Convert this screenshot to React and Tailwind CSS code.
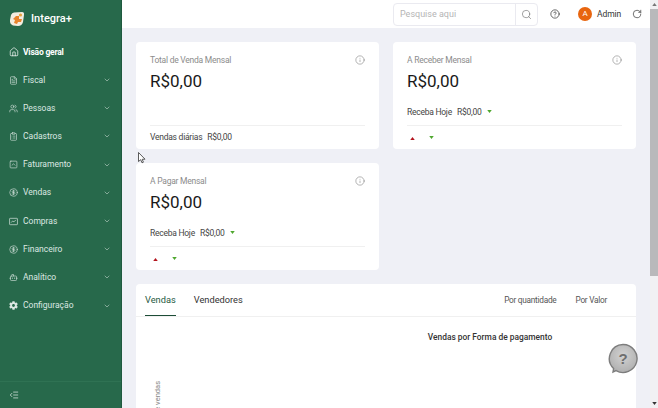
import React from 'react';
import { ChevronDown, Home, FileText, Users, ClipboardList, SquareChevronUp, CircleDollarSign, Bot, IndentDecrease, Search, CircleHelp, RotateCw, Info } from 'lucide-react';
import { FaCog } from 'react-icons/fa';

function ChartBox({ size, className }) {
  return (
    <svg width={size} height={size} viewBox="0 0 24 24" fill="none" stroke="currentColor" strokeWidth="1.8" className={className}>
      <rect x="1.5" y="3.5" width="21" height="17" rx="1.5" />
      <path d="M5.5 15 L10 10.5 L13 13 L18.5 7.5" />
    </svg>
  );
}

function Gear({ size, className }) {
  return <FaCog size={size} className={className} />;
}

const menu = [
  { label: 'Fiscal', icon: FileText },
  { label: 'Pessoas', icon: Users },
  { label: 'Cadastros', icon: ClipboardList },
  { label: 'Faturamento', icon: SquareChevronUp },
  { label: 'Vendas', icon: CircleDollarSign },
  { label: 'Compras', icon: ChartBox },
  { label: 'Financeiro', icon: CircleDollarSign },
  { label: 'Analítico', icon: Bot },
  { label: 'Configuração', icon: Gear },
];

function Logo() {
  return (
    <svg width="16" height="17" viewBox="0 0 16 17">
      <path d="M5 1.5 L13 1 Q15.5 1 15 4 L14 11 Q13 15 9 15 L4 14.5 Q0.5 13 1 9 L2 4 Q3 1.8 5 1.5 Z" fill="#f4ede0" />
      <path d="M7 5 L10 5 L10 8 L13 8 L12 11 L9 11 L8 13 L5 12 L6 9 L4 8 Z" fill="#e8842c" />
      <circle cx="11.5" cy="4" r="1.6" fill="#e8a23c" />
    </svg>
  );
}

function Caret({ up }) {
  return (
    <svg width="5" height="3" viewBox="0 0 6 4">
      <path d={up ? 'M3 0 L6 4 L0 4 Z' : 'M0 0 L6 0 L3 4 Z'} fill={up ? '#b3141d' : '#4ea72e'} />
    </svg>
  );
}

function Card({ title, sub, carets }) {
  return (
    <div className="h-[107px] bg-white rounded-sm px-[14px] flex flex-col">
      <div className="flex items-center justify-between pt-[10px] h-[26px]">
        <span className="text-[8.5px] tracking-[-0.24px] mt-[1px] text-[#8c8c8c]">{title}</span>
        <Info size={10} strokeWidth={1.2} className="text-[#6b6b6b]" />
      </div>
      <div className="text-[17px] leading-[24px] mt-[1px] text-[#1a1a1a]">R$0,00</div>
      {carets ? (
        <>
          <div className="flex items-center gap-[5px] text-[8.5px] tracking-[-0.25px] text-[#444] mt-[12px] h-[14px]">
            <span>{sub}</span>
            <span>R$0,00</span>
            <span className="ml-[1px] mb-[2px]"><Caret /></span>
          </div>
          <div className="border-t border-[#f0f0f0] mt-[6px] pt-[10px] pl-[3px] flex items-start gap-[14px]">
            <span className="mt-[1px] leading-none"><Caret up /></span>
            <span className="leading-none"><Caret /></span>
          </div>
        </>
      ) : (
        <div className="mt-auto border-t border-[#f0f0f0] h-[24px] flex items-center gap-[5px] text-[8.5px] tracking-[-0.25px] text-[#444]">
          <span>{sub}</span>
          <span>R$0,00</span>
        </div>
      )}
    </div>
  );
}

export default function App() {
  return (
    <div className="relative h-[408px] w-[658px] overflow-hidden flex bg-[#eff0f6] font-['Roboto',sans-serif]">
      {/* Sidebar */}
      <aside className="w-[122px] shrink-0 bg-[#27694b] border-r border-[#1f5a3f] flex flex-col text-[#dce8e2]">
        <div className="h-[38px] flex items-center pl-[9px] gap-[6px]">
          <Logo />
          <span className="text-[11px] font-medium text-white">Integra+</span>
        </div>
        <div className="h-[28px] flex items-center pl-[9px] gap-[4px] text-white">
          <Home size={10} strokeWidth={1.7} />
          <span className="text-[8.5px] tracking-[-0.2px] font-bold">Visão geral</span>
        </div>
        <nav className="flex-1">
          {menu.map((m) => (
            <div key={m.label} className="h-[28.2px] flex items-center pl-[9px] pr-[10px] gap-[5px]">
              <m.icon size={9} strokeWidth={1.6} className="shrink-0" />
              <span className="text-[8.5px] flex-1">{m.label}</span>
              <ChevronDown size={8} strokeWidth={1.7} className="opacity-90" />
            </div>
          ))}
        </nav>
        <div className="h-[27px] border-t border-[#2f7253] flex items-center pl-[9px] text-white">
          <IndentDecrease size={10} strokeWidth={1.5} />
        </div>
      </aside>

      {/* Main */}
      <main className="flex-1 min-w-0 flex flex-col">
        <header className="h-[28px] bg-white flex items-center shrink-0 mr-[8px]">
          <div className="ml-[271px] w-[145px] h-[23px] border border-[#eaeaf0] rounded-sm flex">
            <span className="flex-1 pl-[6px] text-[9px] leading-[21px] text-[#b5b5b5]">Pesquise aqui</span>
            <span className="w-[22px] border-l border-[#eaeaf0] flex items-center justify-center">
              <Search size={11} className="text-[#666]" strokeWidth={1.3} />
            </span>
          </div>
          <CircleHelp size={10} strokeWidth={1.6} className="ml-[12px] text-[#222]" />
          <span className="ml-[18px] w-[14px] h-[14px] rounded-full bg-[#e8650f] text-white text-[8px] flex items-center justify-center">A</span>
          <span className="ml-[5px] text-[8.5px] tracking-[-0.1px] text-[#333]">Admin</span>
          <RotateCw size={10} strokeWidth={1.5} className="ml-[11px] text-[#222]" />
        </header>
        <div className="flex-1 pl-[14px] pr-[22px] pt-[14px] overflow-hidden">
          <div className="grid grid-cols-2 gap-x-[14px] gap-y-[14px]">
            <Card title="Total de Venda Mensal" sub="Vendas diárias" />
            <Card title="A Receber Mensal" sub="Receba Hoje" carets />
            <Card title="A Pagar Mensal" sub="Receba Hoje" carets />
          </div>
          <section className="mt-[14px] bg-white h-[140px] rounded-sm relative">
            <div className="flex items-center justify-between h-[33px] border-b border-[#f0f0f0] px-[9px]">
              <div className="flex gap-[18px] text-[9.25px] text-[#333] h-full">
                <span className="border-b border-[#1d4d37] h-full flex items-center text-[#1f5a3f]">Vendas</span>
                <span className="flex items-center">Vendedores</span>
              </div>
              <div className="flex gap-[19px] text-[8.25px] tracking-[-0.25px] text-[#555] pr-[20px]">
                <span>Por quantidade</span>
                <span>Por Valor</span>
              </div>
            </div>
            <div className="text-center text-[8.4px] font-medium text-[#333] mt-[14px] ml-[208px]">Vendas por Forma de pagamento</div>
            <div className="absolute left-[16px] top-[97px] text-[7.5px] text-[#888] [writing-mode:vertical-rl] rotate-180 whitespace-nowrap">Quantidade de vendas</div>
          </section>
        </div>
      </main>

      {/* Scrollbar */}
      <div className="absolute right-0 top-0 bottom-0 w-[8px] bg-[#f1f1f3] flex flex-col items-center justify-between">
        <div className="w-full">
          <div className="h-[9px] flex items-center justify-center">
            <svg width="5" height="3" viewBox="0 0 6 4"><path d="M3 0 L6 4 L0 4 Z" fill="#777" /></svg>
          </div>
          <div className="h-[267px] bg-[#b9b9bb]" />
        </div>
        <div className="h-[9px] flex items-center justify-center">
          <svg width="5" height="3" viewBox="0 0 6 4"><path d="M0 0 L6 0 L3 4 Z" fill="#333" /></svg>
        </div>
      </div>

      {/* Help button */}
      <svg className="absolute left-[607px] top-[343px]" width="32" height="32" viewBox="0 0 32 32">
        <defs>
          <radialGradient id="helpFill" cx="0.5" cy="0.4" r="0.6">
            <stop offset="0" stopColor="#d2d2d2" />
            <stop offset="1" stopColor="#b0b0b0" />
          </radialGradient>
        </defs>
        <path d="M16 1.5a14 14 0 1 1 -7 26.1 l-3 1.4 l0.6 -3.5 a14 14 0 0 1 9.4 -24z" fill="url(#helpFill)" stroke="#7d7d7d" strokeWidth="1.4" />
        <text x="16" y="21" textAnchor="middle" fontSize="15" fontWeight="700" fontFamily="Liberation Sans, sans-serif" fill="#6f6f6f">?</text>
      </svg>

      {/* Cursor */}
      <svg className="absolute left-[138px] top-[152px]" width="8" height="12" viewBox="0 0 8 12">
        <path d="M0.5 0.5 L0.5 9.5 L2.7 7.7 L4 10.8 L5.4 10.2 L4.2 7.3 L7 7.2 Z" fill="#fff" stroke="#333" strokeWidth="0.8" />
      </svg>
    </div>
  );
}
